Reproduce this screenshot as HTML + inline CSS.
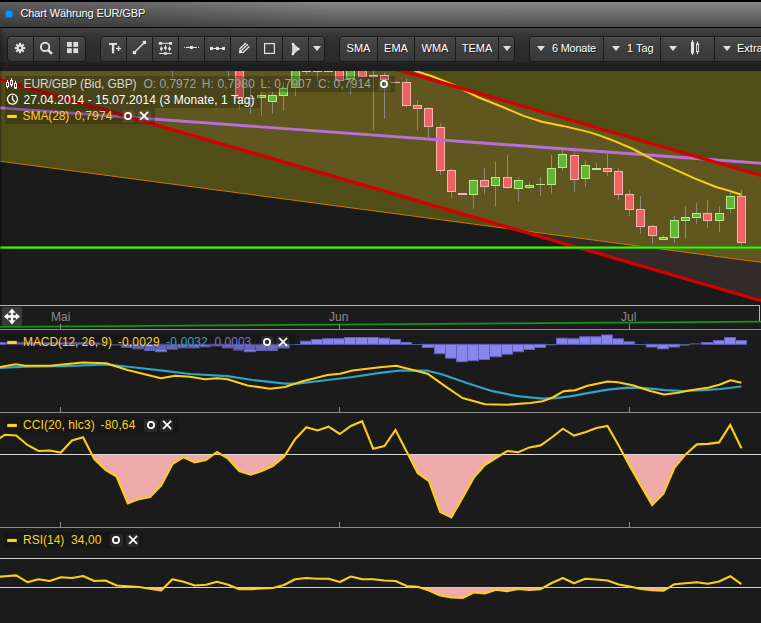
<!DOCTYPE html>
<html><head><meta charset="utf-8"><title>Chart Währung EUR/GBP</title>
<style>
html,body{margin:0;padding:0;}
body{width:761px;height:623px;overflow:hidden;background:#1c1b1b;font-family:"Liberation Sans",Arial,sans-serif;position:relative;}
#title{position:absolute;left:0;top:0;width:761px;height:28px;background:#000;}
#title .g{position:absolute;left:0;top:2px;width:761px;height:25px;background:linear-gradient(90deg,rgba(20,20,20,0.36),rgba(20,20,20,0.27) 120px,rgba(20,20,20,0) 330px),linear-gradient(#8a8a8a,#848484 1px,#4d4d4d);}
#title .dot{position:absolute;left:5px;top:10px;width:8px;height:8px;border-radius:2.5px;background:#0a94fc;box-shadow:inset 0 0 0 1px rgba(0,70,150,0.45);}
#title .t{position:absolute;left:20.5px;top:7px;font-size:11px;line-height:13px;color:#fff;text-shadow:1px 1px 0 #222;white-space:nowrap;letter-spacing:-0.12px;}
#tb{position:absolute;left:0;top:28px;width:761px;height:43px;overflow:hidden;background:linear-gradient(90deg,rgba(0,0,0,0.25),rgba(0,0,0,0) 5px),linear-gradient(#434343,#353535 8px,#2c2c2c 20px,#2a2a2a 33px,#212121 35px,#1d1d1d);}
.grp{position:absolute;top:8px;height:26px;display:flex;border:1px solid #191919;border-radius:4px;background:#191919;box-sizing:border-box;overflow:hidden;}
.b{height:24px;flex:none;box-sizing:border-box;border-right:1px solid #1b1b1b;background:linear-gradient(#484848,#3e3e3e 50%,#383838);position:relative;color:#fff;font-size:11px;line-height:22px;text-align:center;text-shadow:1px 1px 0 #1a1a1a;white-space:nowrap;box-shadow:inset 0 1px 0 rgba(255,255,255,0.06);}
.b:last-child{border-right:0;}
.b svg{position:absolute;left:0;top:0;}
.ar{position:absolute;width:0;height:0;border-left:4.1px solid transparent;border-right:4.1px solid transparent;border-top:5px solid #e0e0e0;top:9px;}
.lg{position:absolute;height:16px;background:rgba(16,16,16,0.27);font-size:12px;line-height:16px;white-space:nowrap;color:#fff;}
.lg span{position:absolute;top:0;}
.lg svg{position:absolute;left:0;top:0;}
.y{color:#ffd21e;}
.bt{position:absolute;top:2px;width:13px;height:13px;border-radius:2px;background:rgba(255,255,255,0.075);}
.ax{position:absolute;top:310px;font-size:12px;line-height:14px;color:#8a8a8a;}
</style></head><body>
<svg width="761" height="623" viewBox="0 0 761 623" style="position:absolute;left:0;top:0">
<defs><clipPath id="cm"><rect x="0" y="71" width="761" height="234"/></clipPath>
<clipPath id="ccb"><rect x="0" y="454.3" width="761" height="80"/></clipPath>
<clipPath id="rsb"><rect x="0" y="587.5" width="761" height="40"/></clipPath>
</defs>
<g clip-path="url(#cm)">
<polygon points="0,-45.8 761,175.4 761,300.7 0,79.5" fill="#f0b4a0" fill-opacity="0.115"/>
<polygon points="0,70 761,70 761,262.3 0,161.2" fill="#a8a010" fill-opacity="0.38"/>
<line x1="0" y1="161.2" x2="761" y2="262.3" stroke="#c87800" stroke-width="1"/>
<line x1="172.5" x2="172.5" y1="70.0" y2="78.0" stroke="#8a8a7a" stroke-width="1"/>
<line x1="228.5" x2="228.5" y1="70.0" y2="78.0" stroke="#8a8a7a" stroke-width="1"/>
<line x1="239.5" x2="239.5" y1="70.0" y2="108.7" stroke="#8a8a7a" stroke-width="1"/>
<rect x="235.5" y="70.5" width="8.0" height="27.0" fill="#f06262" stroke="#f8b4b4" stroke-width="1"/>
<line x1="250.5" x2="250.5" y1="84.8" y2="113.8" stroke="#8a8a7a" stroke-width="1"/>
<rect x="246.0" y="98.0" width="9" height="1.0" fill="#f8b4b4"/>
<line x1="261.5" x2="261.5" y1="92.5" y2="115.5" stroke="#8a8a7a" stroke-width="1"/>
<rect x="257.5" y="95.5" width="8.0" height="2.0" fill="#62b632" stroke="#b4ec8c" stroke-width="1"/>
<line x1="272.5" x2="272.5" y1="91.6" y2="113.8" stroke="#8a8a7a" stroke-width="1"/>
<rect x="268.5" y="95.5" width="8.0" height="6.0" fill="#62b632" stroke="#b4ec8c" stroke-width="1"/>
<line x1="283.5" x2="283.5" y1="82.2" y2="110.7" stroke="#8a8a7a" stroke-width="1"/>
<rect x="279.5" y="88.5" width="8.0" height="7.0" fill="#62b632" stroke="#b4ec8c" stroke-width="1"/>
<line x1="295.5" x2="295.5" y1="70.0" y2="95.9" stroke="#8a8a7a" stroke-width="1"/>
<rect x="291.5" y="70.5" width="8.0" height="17.0" fill="#62b632" stroke="#b4ec8c" stroke-width="1"/>
<line x1="306.5" x2="306.5" y1="70.0" y2="74.5" stroke="#8a8a7a" stroke-width="1"/>
<rect x="302.5" y="70.5" width="8.0" height="1.0" fill="#62b632" stroke="#b4ec8c" stroke-width="1"/>
<line x1="317.5" x2="317.5" y1="70.0" y2="81.4" stroke="#8a8a7a" stroke-width="1"/>
<rect x="313.5" y="70.5" width="8.0" height="1.0" fill="#f06262" stroke="#f8b4b4" stroke-width="1"/>
<line x1="328.5" x2="328.5" y1="70.0" y2="72.0" stroke="#8a8a7a" stroke-width="1"/>
<rect x="324.5" y="70.5" width="8.0" height="1.0" fill="#f06262" stroke="#f8b4b4" stroke-width="1"/>
<line x1="339.5" x2="339.5" y1="70.0" y2="82.0" stroke="#8a8a7a" stroke-width="1"/>
<rect x="335.5" y="70.5" width="8.0" height="10.0" fill="#f06262" stroke="#f8b4b4" stroke-width="1"/>
<line x1="350.5" x2="350.5" y1="70.0" y2="94.8" stroke="#8a8a7a" stroke-width="1"/>
<rect x="346.5" y="70.5" width="8.0" height="8.0" fill="#62b632" stroke="#b4ec8c" stroke-width="1"/>
<line x1="362.5" x2="362.5" y1="70.0" y2="77.0" stroke="#8a8a7a" stroke-width="1"/>
<rect x="358.5" y="70.5" width="8.0" height="6.0" fill="#f06262" stroke="#f8b4b4" stroke-width="1"/>
<line x1="373.5" x2="373.5" y1="70.0" y2="130.0" stroke="#8a8a7a" stroke-width="1"/>
<rect x="369.5" y="75.5" width="8.0" height="1.0" fill="#f06262" stroke="#f8b4b4" stroke-width="1"/>
<line x1="384.5" x2="384.5" y1="72.7" y2="118.9" stroke="#8a8a7a" stroke-width="1"/>
<rect x="380.5" y="75.5" width="8.0" height="4.0" fill="#f06262" stroke="#f8b4b4" stroke-width="1"/>
<line x1="395.5" x2="395.5" y1="81.7" y2="82.7" stroke="#8a8a7a" stroke-width="1"/>
<rect x="391.0" y="82.0" width="9" height="1.0" fill="#f8b4b4"/>
<line x1="406.5" x2="406.5" y1="78.4" y2="107.0" stroke="#8a8a7a" stroke-width="1"/>
<rect x="402.5" y="82.5" width="8.0" height="23.0" fill="#f06262" stroke="#f8b4b4" stroke-width="1"/>
<line x1="417.5" x2="417.5" y1="100.2" y2="130.1" stroke="#8a8a7a" stroke-width="1"/>
<rect x="413.5" y="105.5" width="8.0" height="3.0" fill="#f06262" stroke="#f8b4b4" stroke-width="1"/>
<line x1="428.5" x2="428.5" y1="107.0" y2="137.5" stroke="#8a8a7a" stroke-width="1"/>
<rect x="424.5" y="108.5" width="8.0" height="18.0" fill="#f06262" stroke="#f8b4b4" stroke-width="1"/>
<line x1="440.5" x2="440.5" y1="123.4" y2="175.0" stroke="#8a8a7a" stroke-width="1"/>
<rect x="436.5" y="127.5" width="8.0" height="43.0" fill="#f06262" stroke="#f8b4b4" stroke-width="1"/>
<line x1="451.5" x2="451.5" y1="168.5" y2="198.0" stroke="#8a8a7a" stroke-width="1"/>
<rect x="447.5" y="170.5" width="8.0" height="21.0" fill="#f06262" stroke="#f8b4b4" stroke-width="1"/>
<line x1="462.5" x2="462.5" y1="193.0" y2="194.8" stroke="#8a8a7a" stroke-width="1"/>
<rect x="458.5" y="193.5" width="8.0" height="1.0" fill="#f06262" stroke="#f8b4b4" stroke-width="1"/>
<line x1="473.5" x2="473.5" y1="178.9" y2="208.8" stroke="#8a8a7a" stroke-width="1"/>
<rect x="469.5" y="180.5" width="8.0" height="14.0" fill="#62b632" stroke="#b4ec8c" stroke-width="1"/>
<line x1="484.5" x2="484.5" y1="167.9" y2="194.2" stroke="#8a8a7a" stroke-width="1"/>
<rect x="480.5" y="180.5" width="8.0" height="6.0" fill="#f06262" stroke="#f8b4b4" stroke-width="1"/>
<line x1="495.5" x2="495.5" y1="161.6" y2="206.1" stroke="#8a8a7a" stroke-width="1"/>
<rect x="491.5" y="177.5" width="8.0" height="8.0" fill="#62b632" stroke="#b4ec8c" stroke-width="1"/>
<line x1="507.5" x2="507.5" y1="154.8" y2="189.0" stroke="#8a8a7a" stroke-width="1"/>
<rect x="503.5" y="177.5" width="8.0" height="10.0" fill="#f06262" stroke="#f8b4b4" stroke-width="1"/>
<line x1="518.5" x2="518.5" y1="176.9" y2="202.0" stroke="#8a8a7a" stroke-width="1"/>
<rect x="514.5" y="180.5" width="8.0" height="8.0" fill="#62b632" stroke="#b4ec8c" stroke-width="1"/>
<line x1="529.5" x2="529.5" y1="181.8" y2="189.2" stroke="#8a8a7a" stroke-width="1"/>
<rect x="525.5" y="185.5" width="8.0" height="2.0" fill="#62b632" stroke="#b4ec8c" stroke-width="1"/>
<line x1="540.5" x2="540.5" y1="176.9" y2="196.0" stroke="#8a8a7a" stroke-width="1"/>
<rect x="536.0" y="184.0" width="9" height="1.0" fill="#b4ec8c"/>
<line x1="551.5" x2="551.5" y1="154.8" y2="194.2" stroke="#8a8a7a" stroke-width="1"/>
<rect x="547.5" y="168.5" width="8.0" height="16.0" fill="#62b632" stroke="#b4ec8c" stroke-width="1"/>
<line x1="562.5" x2="562.5" y1="149.2" y2="171.0" stroke="#8a8a7a" stroke-width="1"/>
<rect x="558.5" y="154.5" width="8.0" height="13.0" fill="#62b632" stroke="#b4ec8c" stroke-width="1"/>
<line x1="574.5" x2="574.5" y1="150.3" y2="191.9" stroke="#8a8a7a" stroke-width="1"/>
<rect x="570.5" y="155.5" width="8.0" height="24.0" fill="#f06262" stroke="#f8b4b4" stroke-width="1"/>
<line x1="585.5" x2="585.5" y1="160.0" y2="187.0" stroke="#8a8a7a" stroke-width="1"/>
<rect x="581.5" y="165.5" width="8.0" height="13.0" fill="#62b632" stroke="#b4ec8c" stroke-width="1"/>
<line x1="596.5" x2="596.5" y1="162.9" y2="170.1" stroke="#8a8a7a" stroke-width="1"/>
<rect x="592.5" y="168.5" width="8.0" height="1.0" fill="#62b632" stroke="#b4ec8c" stroke-width="1"/>
<line x1="607.5" x2="607.5" y1="152.5" y2="175.9" stroke="#8a8a7a" stroke-width="1"/>
<rect x="603.5" y="168.5" width="8.0" height="3.0" fill="#f06262" stroke="#f8b4b4" stroke-width="1"/>
<line x1="618.5" x2="618.5" y1="168.2" y2="200.0" stroke="#8a8a7a" stroke-width="1"/>
<rect x="614.5" y="171.5" width="8.0" height="23.0" fill="#f06262" stroke="#f8b4b4" stroke-width="1"/>
<line x1="629.5" x2="629.5" y1="189.8" y2="215.9" stroke="#8a8a7a" stroke-width="1"/>
<rect x="625.5" y="194.5" width="8.0" height="15.0" fill="#f06262" stroke="#f8b4b4" stroke-width="1"/>
<line x1="640.5" x2="640.5" y1="195.9" y2="233.7" stroke="#8a8a7a" stroke-width="1"/>
<rect x="636.5" y="209.5" width="8.0" height="17.0" fill="#f06262" stroke="#f8b4b4" stroke-width="1"/>
<line x1="652.5" x2="652.5" y1="224.8" y2="243.6" stroke="#8a8a7a" stroke-width="1"/>
<rect x="648.5" y="226.5" width="8.0" height="9.0" fill="#f06262" stroke="#f8b4b4" stroke-width="1"/>
<line x1="663.5" x2="663.5" y1="235.1" y2="239.7" stroke="#8a8a7a" stroke-width="1"/>
<rect x="659.5" y="237.5" width="8.0" height="2.0" fill="#62b632" stroke="#b4ec8c" stroke-width="1"/>
<line x1="674.5" x2="674.5" y1="215.9" y2="242.8" stroke="#8a8a7a" stroke-width="1"/>
<rect x="670.5" y="220.5" width="8.0" height="17.0" fill="#62b632" stroke="#b4ec8c" stroke-width="1"/>
<line x1="685.5" x2="685.5" y1="206.0" y2="238.5" stroke="#8a8a7a" stroke-width="1"/>
<rect x="681.5" y="217.5" width="8.0" height="3.0" fill="#62b632" stroke="#b4ec8c" stroke-width="1"/>
<line x1="696.5" x2="696.5" y1="203.1" y2="224.0" stroke="#8a8a7a" stroke-width="1"/>
<rect x="692.5" y="213.5" width="8.0" height="4.0" fill="#62b632" stroke="#b4ec8c" stroke-width="1"/>
<line x1="707.5" x2="707.5" y1="200.0" y2="227.9" stroke="#8a8a7a" stroke-width="1"/>
<rect x="703.5" y="213.5" width="8.0" height="7.0" fill="#f06262" stroke="#f8b4b4" stroke-width="1"/>
<line x1="719.5" x2="719.5" y1="206.0" y2="232.0" stroke="#8a8a7a" stroke-width="1"/>
<rect x="715.5" y="213.5" width="8.0" height="7.0" fill="#62b632" stroke="#b4ec8c" stroke-width="1"/>
<line x1="730.5" x2="730.5" y1="192.3" y2="212.7" stroke="#8a8a7a" stroke-width="1"/>
<rect x="726.5" y="196.5" width="8.0" height="12.0" fill="#62b632" stroke="#b4ec8c" stroke-width="1"/>
<line x1="741.5" x2="741.5" y1="189.8" y2="246.4" stroke="#8a8a7a" stroke-width="1"/>
<rect x="737.5" y="196.5" width="8.0" height="46.0" fill="#f06262" stroke="#f8b4b4" stroke-width="1"/>
<line x1="0" y1="107.9" x2="761" y2="163.2" stroke="#b86fd6" stroke-width="2.9"/>
<polyline points="414.5,70.7 431.5,76.0 452.6,84.4 465.7,91.0 478.8,97.5 505.1,108.0 523.5,115.9 541.9,121.7 562.9,125.9 584.0,130.9 590.0,132.4 600.0,135.6 611.0,139.7 632.0,148.5 653.1,159.7 674.1,169.2 695.1,178.6 716.2,187.0 728.8,190.6 741.4,194.8" fill="none" stroke="#fcce14" stroke-width="2" stroke-linejoin="round"/>
<line x1="0" y1="-45.8" x2="761" y2="175.4" stroke="#d40000" stroke-width="3.3"/>
<line x1="0" y1="79.5" x2="761" y2="300.7" stroke="#d40000" stroke-width="3.3"/>
<rect x="0" y="246.2" width="761" height="2.8" fill="#2a9a00"/><rect x="0" y="246.8" width="761" height="1.6" fill="#4cf000"/>
<rect x="0" y="71" width="1.3" height="234" fill="#000" fill-opacity="0.3"/>
</g>
<rect x="0" y="305" width="760" height="1" fill="#b4b4b4"/><rect x="759" y="305" width="1" height="16" fill="#b4b4b4"/>
<line x1="0" y1="326.9" x2="761" y2="321.6" stroke="#129612" stroke-width="1.6"/>
<rect x="0" y="329" width="761" height="1" fill="#8c8c8c"/>
<rect x="0" y="412" width="761" height="1" fill="#8c8c8c"/>
<rect x="0" y="527" width="761" height="1" fill="#8c8c8c"/>
<rect x="60" y="324" width="1" height="5" fill="#8c8c8c"/>
<rect x="60" y="407" width="1" height="5" fill="#8c8c8c"/>
<rect x="60" y="522" width="1" height="5" fill="#8c8c8c"/>
<rect x="339" y="324" width="1" height="5" fill="#8c8c8c"/>
<rect x="339" y="407" width="1" height="5" fill="#8c8c8c"/>
<rect x="339" y="522" width="1" height="5" fill="#8c8c8c"/>
<rect x="629" y="324" width="1" height="5" fill="#8c8c8c"/>
<rect x="629" y="407" width="1" height="5" fill="#8c8c8c"/>
<rect x="629" y="522" width="1" height="5" fill="#8c8c8c"/>
<rect x="2" y="307" width="20" height="19" rx="2" fill="#3a3a3a"/>
<g fill="#fff" stroke="none"><path d="M12 308.5 l3.6 4.2 h-2.4 v2.6 h2.6 v-2.4 l4.2 3.6 l-4.2 3.6 v-2.4 h-2.6 v2.6 h2.4 l-3.6 4.2 l-3.6 -4.2 h2.4 v-2.6 h-2.6 v2.4 l-4.2 -3.6 l4.2 -3.6 v2.4 h2.6 v-2.6 h-2.4 z"/></g>
<rect x="-12.5" y="342.6" width="11" height="1.7" fill="#8686ec" stroke="#6060c0" stroke-width="1"/>
<rect x="-1.5" y="342.6" width="12" height="1.7" fill="#8686ec" stroke="#6060c0" stroke-width="1"/>
<rect x="10.5" y="342.4" width="11" height="1.9" fill="#8686ec" stroke="#6060c0" stroke-width="1"/>
<rect x="21.5" y="342.4" width="11" height="1.9" fill="#8686ec" stroke="#6060c0" stroke-width="1"/>
<rect x="32.5" y="342.5" width="11" height="1.8" fill="#8686ec" stroke="#6060c0" stroke-width="1"/>
<rect x="43.5" y="342.6" width="11" height="1.7" fill="#8686ec" stroke="#6060c0" stroke-width="1"/>
<rect x="54.5" y="342.6" width="11" height="1.7" fill="#8686ec" stroke="#6060c0" stroke-width="1"/>
<rect x="65.5" y="342.4" width="12" height="1.9" fill="#8686ec" stroke="#6060c0" stroke-width="1"/>
<rect x="77.5" y="342.4" width="11" height="1.9" fill="#8686ec" stroke="#6060c0" stroke-width="1"/>
<rect x="88.5" y="342.8" width="11" height="1.5" fill="#8686ec" stroke="#6060c0" stroke-width="1"/>
<rect x="99" y="343.4" width="11" height="0.9" fill="#6f6fd0"/>
<rect x="110" y="344.3" width="11" height="1.2" fill="#6f6fd0"/>
<rect x="121.5" y="344.3" width="11" height="3.2" fill="#8686ec" stroke="#6060c0" stroke-width="1"/>
<rect x="132.5" y="344.3" width="12" height="4.7" fill="#8686ec" stroke="#6060c0" stroke-width="1"/>
<rect x="144.5" y="344.3" width="11" height="6.2" fill="#8686ec" stroke="#6060c0" stroke-width="1"/>
<rect x="155.5" y="344.3" width="11" height="7.4" fill="#8686ec" stroke="#6060c0" stroke-width="1"/>
<rect x="166.5" y="344.3" width="11" height="5.2" fill="#8686ec" stroke="#6060c0" stroke-width="1"/>
<rect x="177.5" y="344.3" width="11" height="3.7" fill="#8686ec" stroke="#6060c0" stroke-width="1"/>
<rect x="188.5" y="344.3" width="11" height="3.7" fill="#8686ec" stroke="#6060c0" stroke-width="1"/>
<rect x="199.5" y="344.3" width="11" height="2.7" fill="#8686ec" stroke="#6060c0" stroke-width="1"/>
<rect x="210.5" y="344.3" width="12" height="1.7" fill="#8686ec" stroke="#6060c0" stroke-width="1"/>
<rect x="222.5" y="344.3" width="11" height="3.7" fill="#8686ec" stroke="#6060c0" stroke-width="1"/>
<rect x="233.5" y="344.3" width="11" height="5.7" fill="#8686ec" stroke="#6060c0" stroke-width="1"/>
<rect x="244.5" y="344.3" width="11" height="7.4" fill="#8686ec" stroke="#6060c0" stroke-width="1"/>
<rect x="255.5" y="344.3" width="11" height="6.2" fill="#8686ec" stroke="#6060c0" stroke-width="1"/>
<rect x="266.5" y="344.3" width="11" height="6.2" fill="#8686ec" stroke="#6060c0" stroke-width="1"/>
<rect x="277.5" y="344.3" width="12" height="3.7" fill="#8686ec" stroke="#6060c0" stroke-width="1"/>
<rect x="289" y="344.3" width="11" height="0.7" fill="#6f6fd0"/>
<rect x="300.5" y="341.2" width="11" height="3.1" fill="#8686ec" stroke="#6060c0" stroke-width="1"/>
<rect x="311.5" y="339.5" width="11" height="4.8" fill="#8686ec" stroke="#6060c0" stroke-width="1"/>
<rect x="322.5" y="338.7" width="11" height="5.6" fill="#8686ec" stroke="#6060c0" stroke-width="1"/>
<rect x="333.5" y="338.7" width="11" height="5.6" fill="#8686ec" stroke="#6060c0" stroke-width="1"/>
<rect x="344.5" y="337.5" width="11" height="6.8" fill="#8686ec" stroke="#6060c0" stroke-width="1"/>
<rect x="355.5" y="337.5" width="12" height="6.8" fill="#8686ec" stroke="#6060c0" stroke-width="1"/>
<rect x="367.5" y="337.5" width="11" height="6.8" fill="#8686ec" stroke="#6060c0" stroke-width="1"/>
<rect x="378.5" y="338.2" width="11" height="6.1" fill="#8686ec" stroke="#6060c0" stroke-width="1"/>
<rect x="389.5" y="339.5" width="11" height="4.8" fill="#8686ec" stroke="#6060c0" stroke-width="1"/>
<rect x="400.5" y="342.5" width="11" height="1.8" fill="#8686ec" stroke="#6060c0" stroke-width="1"/>
<rect x="411" y="344.3" width="11" height="0.7" fill="#6f6fd0"/>
<rect x="422.5" y="344.3" width="12" height="3.2" fill="#8686ec" stroke="#6060c0" stroke-width="1"/>
<rect x="434.5" y="344.3" width="11" height="9.4" fill="#8686ec" stroke="#6060c0" stroke-width="1"/>
<rect x="445.5" y="344.3" width="11" height="13.9" fill="#8686ec" stroke="#6060c0" stroke-width="1"/>
<rect x="456.5" y="344.3" width="11" height="17.4" fill="#8686ec" stroke="#6060c0" stroke-width="1"/>
<rect x="467.5" y="344.3" width="11" height="16.4" fill="#8686ec" stroke="#6060c0" stroke-width="1"/>
<rect x="478.5" y="344.3" width="11" height="15.2" fill="#8686ec" stroke="#6060c0" stroke-width="1"/>
<rect x="489.5" y="344.3" width="12" height="12.4" fill="#8686ec" stroke="#6060c0" stroke-width="1"/>
<rect x="501.5" y="344.3" width="11" height="9.9" fill="#8686ec" stroke="#6060c0" stroke-width="1"/>
<rect x="512.5" y="344.3" width="11" height="7.4" fill="#8686ec" stroke="#6060c0" stroke-width="1"/>
<rect x="523.5" y="344.3" width="11" height="5.2" fill="#8686ec" stroke="#6060c0" stroke-width="1"/>
<rect x="534.5" y="344.3" width="11" height="3.2" fill="#8686ec" stroke="#6060c0" stroke-width="1"/>
<rect x="545" y="344.3" width="11" height="0.9" fill="#6f6fd0"/>
<rect x="556.5" y="338.2" width="11" height="6.1" fill="#8686ec" stroke="#6060c0" stroke-width="1"/>
<rect x="567.5" y="338.8" width="12" height="5.5" fill="#8686ec" stroke="#6060c0" stroke-width="1"/>
<rect x="579.5" y="336.8" width="11" height="7.5" fill="#8686ec" stroke="#6060c0" stroke-width="1"/>
<rect x="590.5" y="336.8" width="11" height="7.5" fill="#8686ec" stroke="#6060c0" stroke-width="1"/>
<rect x="601.5" y="335.0" width="11" height="9.3" fill="#8686ec" stroke="#6060c0" stroke-width="1"/>
<rect x="612.5" y="338.8" width="11" height="5.5" fill="#8686ec" stroke="#6060c0" stroke-width="1"/>
<rect x="623.5" y="341.8" width="11" height="2.5" fill="#8686ec" stroke="#6060c0" stroke-width="1"/>
<rect x="634" y="344.3" width="12" height="0.7" fill="#6f6fd0"/>
<rect x="646.5" y="344.3" width="11" height="2.7" fill="#8686ec" stroke="#6060c0" stroke-width="1"/>
<rect x="657.5" y="344.3" width="11" height="4.5" fill="#8686ec" stroke="#6060c0" stroke-width="1"/>
<rect x="668.5" y="344.3" width="11" height="2.7" fill="#8686ec" stroke="#6060c0" stroke-width="1"/>
<rect x="679" y="344.3" width="11" height="1.2" fill="#6f6fd0"/>
<rect x="690" y="343.5" width="11" height="0.8" fill="#6f6fd0"/>
<rect x="701.5" y="342.5" width="12" height="1.8" fill="#8686ec" stroke="#6060c0" stroke-width="1"/>
<rect x="713.5" y="340.5" width="11" height="3.8" fill="#8686ec" stroke="#6060c0" stroke-width="1"/>
<rect x="724.5" y="337.5" width="11" height="6.8" fill="#8686ec" stroke="#6060c0" stroke-width="1"/>
<rect x="735.5" y="340.5" width="11" height="3.8" fill="#8686ec" stroke="#6060c0" stroke-width="1"/>
<polyline points="0.0,368.0 25.0,366.7 62.5,366.2 107.5,364.5 135.0,367.5 162.5,370.7 190.0,374.0 227.5,376.2 252.5,380.0 285.0,383.7 297.5,383.7 327.5,380.0 352.5,377.0 380.0,372.8 400.0,370.5 427.5,370.7 442.5,374.5 467.5,383.2 492.5,391.2 517.5,396.2 542.5,398.7 555.0,398.2 570.0,396.4 587.6,393.2 607.7,389.7 627.7,387.7 645.3,388.2 665.4,390.2 683.0,391.0 703.0,390.2 720.6,389.0 741.4,386.5" fill="none" stroke="#2fa3c8" stroke-width="2.2" stroke-linejoin="round"/>
<polyline points="0.0,367.0 16.0,364.2 25.0,365.7 50.0,365.7 82.5,362.5 106.0,363.2 127.5,370.0 161.0,378.2 175.0,375.7 190.0,376.8 205.0,379.2 217.5,378.2 227.5,379.2 247.5,385.5 270.0,388.7 285.0,387.0 302.5,381.2 327.5,375.0 340.0,373.7 352.5,370.5 380.0,367.3 396.0,365.7 410.0,369.2 427.5,373.7 445.0,386.2 462.5,398.0 485.0,404.2 507.5,404.7 530.0,403.0 542.5,401.2 552.5,397.5 563.7,391.2 570.0,390.6 575.0,390.2 587.6,385.7 607.7,381.5 617.7,382.2 632.7,385.2 650.3,391.0 664.0,394.5 678.0,392.7 690.5,390.2 708.0,387.7 719.3,384.7 730.6,380.2 741.4,382.7" fill="none" stroke="#fcce14" stroke-width="2.1" stroke-linejoin="round"/>
<polygon points="-6.1,454.3 -6.1,442.0 5.0,434.7 16.2,435.5 27.4,445.0 38.5,451.0 49.7,450.5 60.8,452.5 72.0,440.5 83.1,437.2 94.3,459.2 105.5,470.0 116.6,476.7 127.8,503.4 138.9,499.1 150.1,497.1 161.2,485.4 172.4,464.2 183.6,457.2 194.7,462.4 205.9,460.0 217.0,452.0 228.2,458.7 239.3,471.2 250.5,474.7 261.7,471.0 272.8,466.0 284.0,456.7 295.1,439.2 306.3,427.2 317.4,430.5 328.6,426.7 339.8,434.0 350.9,426.0 362.1,421.2 373.2,448.7 384.4,446.0 395.5,430.0 406.7,451.7 417.8,473.4 429.0,481.2 440.2,512.1 451.3,517.4 462.5,497.9 473.6,477.9 484.8,465.0 495.9,458.0 507.1,451.0 518.3,452.2 529.4,447.4 540.6,445.4 551.7,437.5 562.9,428.7 574.0,435.6 585.2,432.3 596.4,428.0 607.5,426.0 618.7,445.6 629.8,466.2 641.0,485.8 652.1,505.1 663.3,493.8 674.5,467.5 685.6,454.4 696.8,444.4 707.9,443.9 719.1,442.4 730.2,425.0 741.4,448.2 741.4,454.3" fill="#efaaaa" clip-path="url(#ccb)"/>
<rect x="0" y="454" width="761" height="1" fill="#d8d8d8"/>
<polyline points="-6.1,442.0 5.0,434.7 16.2,435.5 27.4,445.0 38.5,451.0 49.7,450.5 60.8,452.5 72.0,440.5 83.1,437.2 94.3,459.2 105.5,470.0 116.6,476.7 127.8,503.4 138.9,499.1 150.1,497.1 161.2,485.4 172.4,464.2 183.6,457.2 194.7,462.4 205.9,460.0 217.0,452.0 228.2,458.7 239.3,471.2 250.5,474.7 261.7,471.0 272.8,466.0 284.0,456.7 295.1,439.2 306.3,427.2 317.4,430.5 328.6,426.7 339.8,434.0 350.9,426.0 362.1,421.2 373.2,448.7 384.4,446.0 395.5,430.0 406.7,451.7 417.8,473.4 429.0,481.2 440.2,512.1 451.3,517.4 462.5,497.9 473.6,477.9 484.8,465.0 495.9,458.0 507.1,451.0 518.3,452.2 529.4,447.4 540.6,445.4 551.7,437.5 562.9,428.7 574.0,435.6 585.2,432.3 596.4,428.0 607.5,426.0 618.7,445.6 629.8,466.2 641.0,485.8 652.1,505.1 663.3,493.8 674.5,467.5 685.6,454.4 696.8,444.4 707.9,443.9 719.1,442.4 730.2,425.0 741.4,448.2" fill="none" stroke="#fcce14" stroke-width="2.1" stroke-linejoin="miter"/>
<polygon points="-6.1,587.5 -6.1,577.2 5.0,576.2 16.2,575.4 27.4,582.2 38.5,579.2 49.7,581.0 60.8,577.2 72.0,578.0 83.1,576.0 94.3,581.0 105.5,580.5 116.6,585.5 127.8,586.2 138.9,587.0 150.1,588.7 161.2,590.5 172.4,579.2 183.6,581.7 194.7,585.5 205.9,584.7 217.0,581.7 228.2,584.7 239.3,589.2 250.5,589.2 261.7,588.5 272.8,588.0 284.0,585.0 295.1,579.2 306.3,578.0 317.4,578.7 328.6,578.7 339.8,582.0 350.9,576.5 362.1,579.2 373.2,579.2 384.4,580.5 395.5,581.0 406.7,586.0 417.8,586.7 429.0,590.5 440.2,595.5 451.3,597.5 462.5,598.0 473.6,592.5 484.8,593.5 495.9,589.7 507.1,591.2 518.3,589.0 529.4,590.0 540.6,589.2 551.7,583.0 562.9,578.0 574.0,583.2 585.2,578.7 596.4,579.5 607.5,580.5 618.7,584.5 629.8,586.5 641.0,589.0 652.1,590.3 663.3,590.8 674.5,584.2 685.6,583.2 696.8,582.2 707.9,583.7 719.1,581.5 730.2,576.2 741.4,584.2 741.4,587.5" fill="#efaaaa" clip-path="url(#rsb)"/>
<rect x="0" y="558" width="761" height="1" fill="#d0d0d0"/>
<rect x="0" y="587" width="761" height="1" fill="#d0d0d0"/>
<polyline points="-6.1,577.2 5.0,576.2 16.2,575.4 27.4,582.2 38.5,579.2 49.7,581.0 60.8,577.2 72.0,578.0 83.1,576.0 94.3,581.0 105.5,580.5 116.6,585.5 127.8,586.2 138.9,587.0 150.1,588.7 161.2,590.5 172.4,579.2 183.6,581.7 194.7,585.5 205.9,584.7 217.0,581.7 228.2,584.7 239.3,589.2 250.5,589.2 261.7,588.5 272.8,588.0 284.0,585.0 295.1,579.2 306.3,578.0 317.4,578.7 328.6,578.7 339.8,582.0 350.9,576.5 362.1,579.2 373.2,579.2 384.4,580.5 395.5,581.0 406.7,586.0 417.8,586.7 429.0,590.5 440.2,595.5 451.3,597.5 462.5,598.0 473.6,592.5 484.8,593.5 495.9,589.7 507.1,591.2 518.3,589.0 529.4,590.0 540.6,589.2 551.7,583.0 562.9,578.0 574.0,583.2 585.2,578.7 596.4,579.5 607.5,580.5 618.7,584.5 629.8,586.5 641.0,589.0 652.1,590.3 663.3,590.8 674.5,584.2 685.6,583.2 696.8,582.2 707.9,583.7 719.1,581.5 730.2,576.2 741.4,584.2" fill="none" stroke="#fcce14" stroke-width="2.1" stroke-linejoin="round"/>
</svg>
<div id="title"><div class="g"></div><div class="dot"></div><div class="t">Chart Währung EUR/GBP</div></div>
<div id="tb">
 <div class="grp" style="left:7px;width:79px">
  <div class="b" style="width:26px;"><svg width="25" height="24" viewBox="0 0 25 24"><g stroke="#e2e2e2" stroke-width="2" stroke-linecap="butt"><line x1="12" y1="5.8" x2="12" y2="16.2"/><line x1="6.8" y1="11" x2="17.2" y2="11"/><line x1="8.3" y1="7.3" x2="15.7" y2="14.7"/><line x1="15.7" y1="7.3" x2="8.3" y2="14.7"/></g><circle cx="12" cy="11" r="3.4" fill="#e2e2e2"/><circle cx="12" cy="11" r="1.2" fill="#333"/></svg></div>
  <div class="b" style="width:26px;"><svg width="25" height="24" viewBox="0 0 25 24"><circle cx="11.1" cy="9.9" r="4.2" fill="none" stroke="#e2e2e2" stroke-width="1.9"/><line x1="14.4" y1="13.4" x2="17.2" y2="16.2" stroke="#e2e2e2" stroke-width="2.6" stroke-linecap="round"/></svg></div>
  <div class="b" style="width:25px;"><svg width="25" height="24" viewBox="0 0 25 24"><g fill="#dcdcdc"><rect x="7" y="5" width="4.8" height="4.9"/><rect x="13.3" y="5" width="4.8" height="4.9"/><rect x="7" y="11.3" width="4.8" height="4.8"/><rect x="13.3" y="11.3" width="4.8" height="4.8"/></g></svg></div>
 </div>
 <div class="grp" style="left:100px;width:225px">
  <div class="b" style="width:26px;"><svg width="25" height="24" viewBox="0 0 25 24"><g fill="#e2e2e2"><rect x="8" y="6" width="8" height="1.9"/><rect x="10.9" y="6" width="2.3" height="10.3"/><rect x="15" y="10.9" width="5.1" height="1.3"/><rect x="16.9" y="9" width="1.3" height="5.1"/></g></svg></div>
  <div class="b" style="width:26px;"><svg width="25" height="24" viewBox="0 0 25 24"><line x1="7.4" y1="15.5" x2="17.4" y2="5.5" stroke="#e2e2e2" stroke-width="1.4"/><rect x="5.8" y="13.9" width="3.3" height="3.3" fill="#e2e2e2"/><rect x="15.8" y="3.8" width="3.3" height="3.3" fill="#e2e2e2"/></svg></div>
  <div class="b" style="width:26px;"><svg width="25" height="24" viewBox="0 0 25 24"><g fill="#e2e2e2"><rect x="6.2" y="5.8" width="12.6" height="1"/><rect x="5.8" y="5" width="3.1" height="2.7"/><rect x="16" y="5" width="3" height="2.7"/><rect x="6.2" y="16" width="12.6" height="1"/><rect x="10.9" y="15.2" width="3" height="2.5"/><rect x="7.9" y="9.3" width="0.9" height="5.1"/><rect x="7" y="10.6" width="2.7" height="2.2"/><rect x="12" y="8.2" width="0.9" height="5.2"/><rect x="11.1" y="9.8" width="2.7" height="2.2"/><rect x="16.1" y="9.3" width="0.9" height="5.1"/><rect x="15.2" y="10.6" width="2.7" height="2.2"/></g></svg></div>
  <div class="b" style="width:26px;"><svg width="25" height="24" viewBox="0 0 25 24"><g fill="#e2e2e2"><rect x="7" y="9.9" width="10.8" height="1.1"/><rect x="11" y="9" width="2.9" height="3"/><rect x="5" y="9.9" width="0.9" height="1.1"/><rect x="19.2" y="9.9" width="0.9" height="1.1"/></g></svg></div>
  <div class="b" style="width:26px;"><svg width="25" height="24" viewBox="0 0 25 24"><g fill="#e2e2e2"><rect x="6" y="11" width="13" height="1"/><rect x="5" y="9.9" width="2.9" height="3.1"/><rect x="10.9" y="9.9" width="3" height="3.1"/><rect x="17.1" y="9.9" width="2.9" height="3.1"/></g></svg></div>
  <div class="b" style="width:26px;"><svg width="25" height="24" viewBox="0 0 25 24"><g stroke="#f0f0f0" stroke-width="1.25" fill="none" stroke-linecap="round"><line x1="8.9" y1="11.8" x2="14.6" y2="6.2"/><line x1="9.9" y1="13.9" x2="16.6" y2="7.5"/><line x1="12" y1="15.6" x2="18" y2="9.8"/></g><path d="M8.5 12 L8 16.2 L12.2 15.8 Z" fill="#f0f0f0"/></svg></div>
  <div class="b" style="width:26px;"><svg width="25" height="24" viewBox="0 0 25 24"><rect x="7.6" y="6.6" width="9.8" height="9.8" fill="none" stroke="#e2e2e2" stroke-width="1.2"/></svg></div>
  <div class="b" style="width:26px;"><svg width="25" height="24" viewBox="0 0 25 24"><path d="M9.9 6.9 L15.4 11.9 L9.9 16.9 Z" fill="#d8d8d8" stroke="#d8d8d8" stroke-width="1.5" stroke-linejoin="round"/><circle cx="9.9" cy="6.9" r="1.25" fill="#f4f4f4"/><circle cx="9.9" cy="16.9" r="1.25" fill="#f4f4f4"/><circle cx="15.4" cy="11.9" r="1.25" fill="#f4f4f4"/></svg></div>
  <div class="b" style="width:15px;"><i class="ar" style="left:3.5px"></i></div>
 </div>
 <div class="grp" style="left:339px;width:176px">
  <div class="b" style="width:38px;">SMA</div>
  <div class="b" style="width:37px;">EMA</div>
  <div class="b" style="width:41px;">WMA</div>
  <div class="b" style="width:43px;">TEMA</div>
  <div class="b" style="width:15px;"><i class="ar" style="left:3.5px"></i></div>
 </div>
 <div class="grp" style="left:529px;width:260px;border-radius:4px 0 0 4px">
  <div class="b" style="width:74px;text-align:left;padding-left:22px"><i class="ar" style="left:7.4px"></i><span style="letter-spacing:-0.25px">6 Monate</span></div>
  <div class="b" style="width:57px;text-align:left;padding-left:23px"><i class="ar" style="left:7.5px"></i>1 Tag</div>
  <div class="b" style="width:54px;"><i class="ar" style="left:7.5px"></i><svg width="53" height="24" viewBox="0 0 53 24"><g fill="#e2e2e2"><rect x="31" y="3" width="1" height="15"/><rect x="30" y="5" width="3" height="11.4"/><rect x="36" y="4.5" width="1" height="12.7"/><rect x="35.5" y="6.9" width="2" height="7.8" fill="#3c3c3c" stroke="#e2e2e2" stroke-width="1"/></g></svg></div>
  <div class="b" style="width:74px;text-align:left;padding-left:22px"><i class="ar" style="left:7.5px"></i>Extras</div>
 </div>
</div>

<!-- main legend -->
<div class="lg" style="left:5px;top:76px;width:390px;color:#d6d6d6">
 <svg width="20" height="16" viewBox="0 0 20 16"><g fill="#3e3b13" stroke="#fff" stroke-width="1"><line x1="2.5" y1="4" x2="2.5" y2="12.4"/><rect x="1.5" y="6.5" width="2" height="4"/><line x1="6.5" y1="2.1" x2="6.5" y2="11.1"/><rect x="5.5" y="4.5" width="2" height="4.4"/><line x1="10.5" y1="4.8" x2="10.5" y2="13"/><rect x="9.5" y="7.5" width="2" height="4.6"/></g></svg>
 <span style="left:18.5px;letter-spacing:-0.08px">EUR/GBP (Bid, GBP)</span>
 <span style="left:138.4px;color:#a2a294;letter-spacing:0px">O: 0,7972</span>
 <span style="left:196.8px;color:#a2a294;letter-spacing:0.1px">H: 0,7980</span>
 <span style="left:255.5px;color:#a2a294;letter-spacing:0.13px">L: 0,7907</span>
 <span style="left:312.9px;color:#a2a294;letter-spacing:0.13px">C: 0,7914</span>
 <i class="bt" style="left:372.5px"></i><svg style="left:372.0px" width="14" height="16" viewBox="0 0 14 16"><circle cx="7" cy="7.9" r="3.1" fill="none" stroke="#fff" stroke-width="1.75"/></svg>
</div>
<div class="lg" style="left:5px;top:92px;width:255px">
 <svg width="20" height="16" viewBox="0 0 20 16"><circle cx="7.5" cy="7.2" r="5" fill="none" stroke="#fff" stroke-width="1.3"/><path d="M7.5 3.7 V7.4 L10 10" fill="none" stroke="#fff" stroke-width="1.2"/></svg>
 <span style="left:18.4px;letter-spacing:0.08px">27.04.2014 - 15.07.2014 (3 Monate, 1 Tag)</span>
</div>
<div class="lg y" style="left:5px;top:108px;width:150px">
 <svg width="20" height="16" viewBox="0 0 20 16"><rect x="2.2" y="6.9" width="9.6" height="3.1" fill="#ffd21e"/></svg>
 <span style="left:17.6px;letter-spacing:-0.1px">SMA(28)</span><span style="left:69.8px;letter-spacing:0.2px">0,7974</span>
 <i class="bt" style="left:116.5px"></i><svg style="left:116.0px" width="14" height="16" viewBox="0 0 14 16"><circle cx="7" cy="7.9" r="3.1" fill="none" stroke="#fff" stroke-width="1.75"/></svg><i class="bt" style="left:132.5px"></i><svg style="left:132.0px" width="14" height="16" viewBox="0 0 14 16"><path d="M3.1 3.9 L11.1 11.9 M11.1 3.9 L3.1 11.9" stroke="#fff" stroke-width="1.7"/></svg>
</div>

<div class="ax" style="left:51px">Mai</div>
<div class="ax" style="left:329px">Jun</div>
<div class="ax" style="left:621px">Jul</div>

<div class="lg y" style="left:5px;top:334px;width:289px">
 <svg width="20" height="16" viewBox="0 0 20 16"><rect x="2.2" y="6.9" width="9.6" height="3.1" fill="#ffd21e"/></svg>
 <span style="left:18px;letter-spacing:-0.08px">MACD(12, 26, 9)</span><span style="left:112.7px;letter-spacing:0.2px">-0,0029</span>
 <span style="left:161.2px;color:#2fa3c8;letter-spacing:0.15px">-0,0032</span><span style="left:209.6px;color:#7272d6">0,0003</span>
 <i class="bt" style="left:255.9px"></i><svg style="left:255.4px" width="14" height="16" viewBox="0 0 14 16"><circle cx="7" cy="7.9" r="3.1" fill="none" stroke="#fff" stroke-width="1.75"/></svg><i class="bt" style="left:271.4px"></i><svg style="left:270.9px" width="14" height="16" viewBox="0 0 14 16"><path d="M3.1 3.9 L11.1 11.9 M11.1 3.9 L3.1 11.9" stroke="#fff" stroke-width="1.7"/></svg>
</div>
<div class="lg y" style="left:5px;top:417px;width:174px">
 <svg width="20" height="16" viewBox="0 0 20 16"><rect x="2.2" y="6.9" width="9.6" height="3.1" fill="#ffd21e"/></svg>
 <span style="left:18px;letter-spacing:0.08px">CCI(20, hlc3)</span><span style="left:95.6px;letter-spacing:0.15px">-80,64</span>
 <i class="bt" style="left:139.4px"></i><svg style="left:138.9px" width="14" height="16" viewBox="0 0 14 16"><circle cx="7" cy="7.9" r="3.1" fill="none" stroke="#fff" stroke-width="1.75"/></svg><i class="bt" style="left:155.4px"></i><svg style="left:154.9px" width="14" height="16" viewBox="0 0 14 16"><path d="M3.1 3.9 L11.1 11.9 M11.1 3.9 L3.1 11.9" stroke="#fff" stroke-width="1.7"/></svg>
</div>
<div class="lg y" style="left:5px;top:532px;width:138px">
 <svg width="20" height="16" viewBox="0 0 20 16"><rect x="2.2" y="6.9" width="9.6" height="3.1" fill="#ffd21e"/></svg>
 <span style="left:18px">RSI(14)</span><span style="left:65.9px;letter-spacing:0.12px">34,00</span>
 <i class="bt" style="left:104.9px"></i><svg style="left:104.4px" width="14" height="16" viewBox="0 0 14 16"><circle cx="7" cy="7.9" r="3.1" fill="none" stroke="#fff" stroke-width="1.75"/></svg><i class="bt" style="left:121.2px"></i><svg style="left:120.7px" width="14" height="16" viewBox="0 0 14 16"><path d="M3.1 3.9 L11.1 11.9 M11.1 3.9 L3.1 11.9" stroke="#fff" stroke-width="1.7"/></svg>
</div>
</body></html>
